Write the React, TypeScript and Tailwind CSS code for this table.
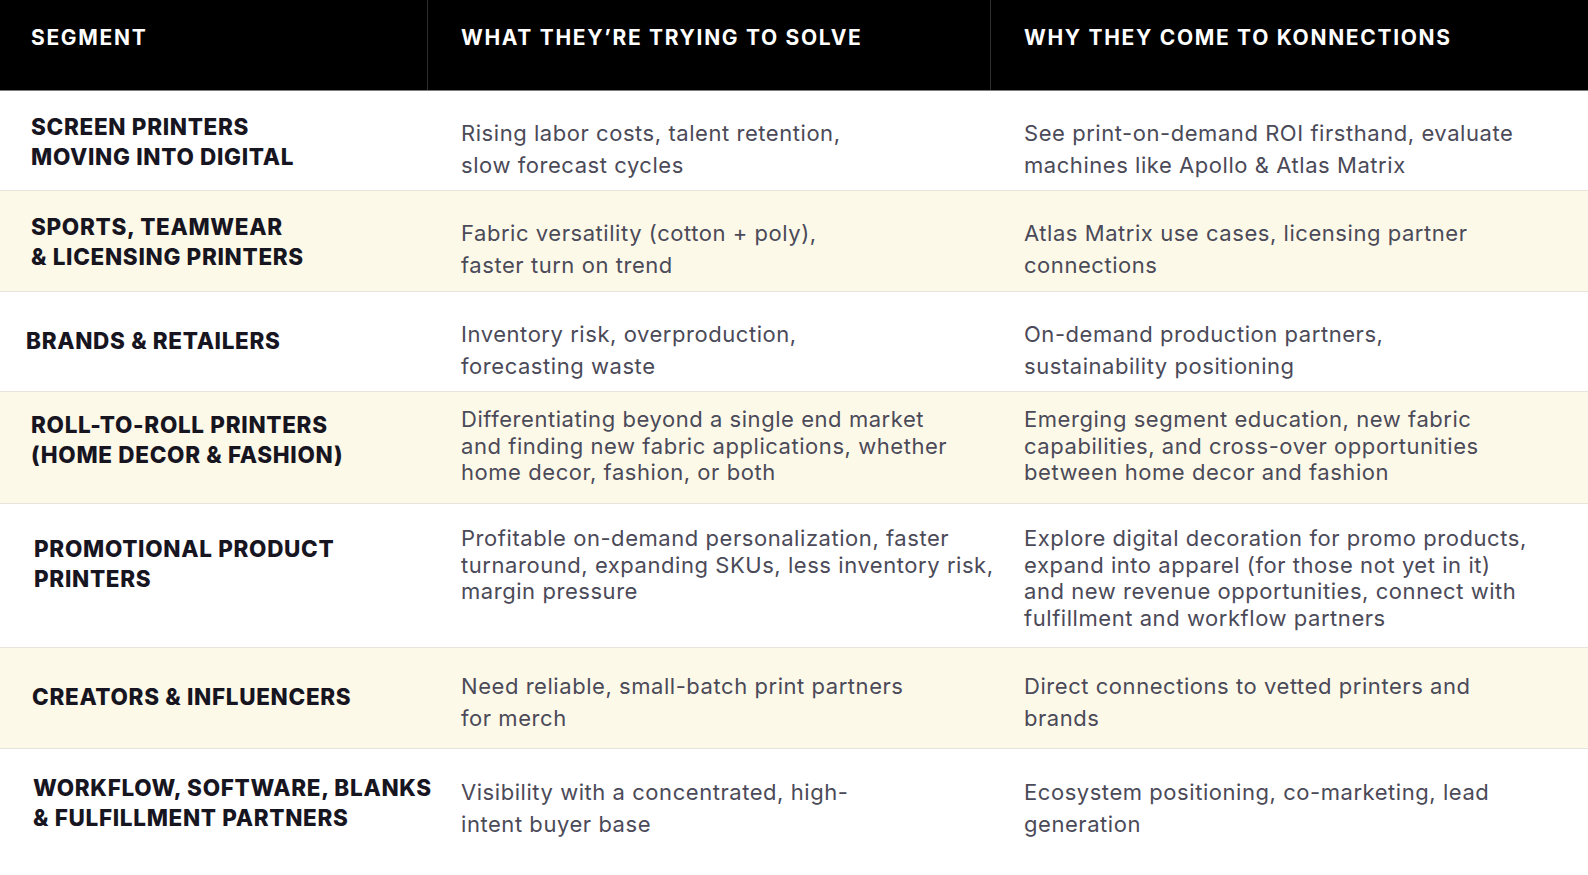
import React from "react";

type Row = {
  seg: string[];
  what: string[];
  why: string[];
  cream: boolean;
  h: string;
  segCls: string;
  txtCls: string;
};

const rows: Row[] = [
  {
    seg: ["SCREEN PRINTERS", "MOVING INTO DIGITAL"],
    what: ["Rising labor costs, talent retention,", "slow forecast cycles"],
    why: ["See print-on-demand ROI firsthand, evaluate", "machines like Apollo & Atlas Matrix"],
    cream: false,
    h: "h-[100px]",
    segCls: "pt-[21px] pl-[31px]",
    txtCls: "pt-[26px] leading-[32px]",
  },
  {
    seg: ["SPORTS, TEAMWEAR", "& LICENSING PRINTERS"],
    what: ["Fabric versatility (cotton + poly),", "faster turn on trend"],
    why: ["Atlas Matrix use cases, licensing partner", "connections"],
    cream: true,
    h: "h-[101px]",
    segCls: "pt-[21px] pl-[31px]",
    txtCls: "pt-[26px] leading-[32px]",
  },
  {
    seg: ["BRANDS & RETAILERS"],
    what: ["Inventory risk, overproduction,", "forecasting waste"],
    why: ["On-demand production partners,", "sustainability positioning"],
    cream: false,
    h: "h-[100px]",
    segCls: "pt-[34px] pl-[26px]",
    txtCls: "pt-[26px] leading-[32px]",
  },
  {
    seg: ["ROLL-TO-ROLL PRINTERS", "(HOME DECOR & FASHION)"],
    what: [
      "Differentiating beyond a single end market",
      "and finding new fabric applications, whether",
      "home decor, fashion, or both",
    ],
    why: [
      "Emerging segment education, new fabric",
      "capabilities, and cross-over opportunities",
      "between home decor and fashion",
    ],
    cream: true,
    h: "h-[112px]",
    segCls: "pt-[18px] pl-[31px]",
    txtCls: "pt-[14px] leading-[26.5px]",
  },
  {
    seg: ["PROMOTIONAL PRODUCT", "PRINTERS"],
    what: [
      "Profitable on-demand personalization, faster",
      "turnaround, expanding SKUs, less inventory risk,",
      "margin pressure",
    ],
    why: [
      "Explore digital decoration for promo products,",
      "expand into apparel (for those not yet in it)",
      "and new revenue opportunities, connect with",
      "fulfillment and workflow partners",
    ],
    cream: false,
    h: "h-[144px]",
    segCls: "pt-[30px] pl-[34px]",
    txtCls: "pt-[21px] leading-[26.5px] pl-[2px]",
  },
  {
    seg: ["CREATORS & INFLUENCERS"],
    what: ["Need reliable, small-batch print partners", "for merch"],
    why: ["Direct connections to vetted printers and", "brands"],
    cream: true,
    h: "h-[101px]",
    segCls: "pt-[34px] pl-[32px]",
    txtCls: "pt-[22px] leading-[32px] pl-[1px]",
  },
  {
    seg: ["WORKFLOW, SOFTWARE, BLANKS", "& FULFILLMENT PARTNERS"],
    what: ["Visibility with a concentrated, high-", "intent buyer base"],
    why: ["Ecosystem positioning, co-marketing, lead", "generation"],
    cream: false,
    h: "h-[127px]",
    segCls: "pt-[24px] pl-[33px]",
    txtCls: "pt-[27px] leading-[32px] pl-[1px]",
  },
];

const font = { fontFamily: "Inter, 'Noto Sans', sans-serif" };

function Lines({ lines }: { lines: string[] }) {
  return (
    <>
      {lines.map((l, i) => (
        <div key={i} className="whitespace-nowrap">
          {l}
        </div>
      ))}
    </>
  );
}

export default function App() {
  return (
    <div className="w-[1588px] h-[875px] overflow-hidden bg-white" style={font}>
      <div className="grid grid-cols-[428px_563px_1fr] h-[91px] bg-black border-b border-[#7d7d7d] text-white font-bold text-[21px] tracking-[0.08em]">
        <div className="pl-[31px] pt-[24px] leading-[28px] border-r border-[#2e2e2e]">SEGMENT</div>
        <div className="pl-[33px] pt-[24px] leading-[28px] border-r border-[#2e2e2e]">WHAT THEY’RE TRYING TO SOLVE</div>
        <div className="pl-[33px] pt-[24px] leading-[28px]">WHY THEY COME TO KONNECTIONS</div>
      </div>
      {rows.map((r, i) => (
        <div
          key={i}
          className={`grid grid-cols-[428px_563px_1fr] ${r.h} ${
            i < rows.length - 1 ? "border-b border-[#e8e4dc]" : ""
          } ${r.cream ? "bg-[#fdf9e9]" : "bg-white"}`}
        >
          <div className={`${r.segCls} text-[22.5px] leading-[29.5px] font-extrabold text-[#17151f] tracking-[0.03em]`}>
            <Lines lines={r.seg} />
          </div>
          <div className={`${r.txtCls} pl-[33px] text-[22px] tracking-[0.025em] text-[#4b4a58]`}>
            <Lines lines={r.what} />
          </div>
          <div className={`${r.txtCls} pl-[33px] text-[22px] tracking-[0.025em] text-[#4b4a58]`}>
            <Lines lines={r.why} />
          </div>
        </div>
      ))}
    </div>
  );
}
